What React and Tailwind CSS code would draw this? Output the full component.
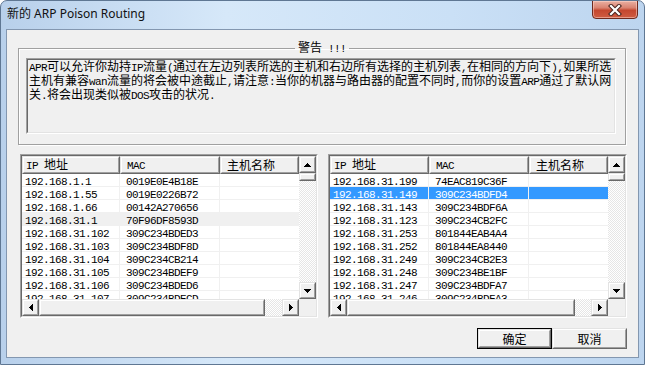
const leftRows = [
  ['192.168.1.1', '0019E0E4B18E'],
  ['192.168.1.55', '0019E0226B72'],
  ['192.168.1.66', '00142A270656'],
  ['192.168.31.1', '70F96DF8593D'],
  ['192.168.31.102', '309C234BDED3'],
  ['192.168.31.103', '309C234BDF8D'],
  ['192.168.31.104', '309C234CB214'],
  ['192.168.31.105', '309C234BDEF9'],
  ['192.168.31.106', '309C234BDED6'],
  ['192.168.31.107', '309C234BDECD'],
];

const rightRows = [
  ['192.168.31.199', '74EAC819C36F'],
  ['192.168.31.149', '309C234BDFD4'],
  ['192.168.31.143', '309C234BDF6A'],
  ['192.168.31.123', '309C234CB2FC'],
  ['192.168.31.253', '801844EAB4A4'],
  ['192.168.31.252', '801844EA8440'],
  ['192.168.31.249', '309C234CB2E3'],
  ['192.168.31.248', '309C234BE1BF'],
  ['192.168.31.247', '309C234BDFA7'],
  ['192.168.31.246', '309C234BDFA3'],
];

// halfwidth runs get a 6px-wide mono face, like the bitmap font in the shot
function T({ s }) {
  return s.split(/([\x20-\x7e]+)/).map((p, i) => {
    if (!p) return null;
    if (/^[\x20-\x7e]+$/.test(p))
      return (
        <span key={i} className="font-['Liberation_Mono'] text-[11px] tracking-[-0.6px] whitespace-pre">
          {p}
        </span>
      );
    return <span key={i}>{p}</span>;
  });
}

function Raised({ className = '', inner = 'justify-center', children }) {
  return (
    <div className={`border border-t-[#e3e3e3] border-l-[#e3e3e3] border-r-[#696969] border-b-[#696969] bg-[#f0f0f0] ${className}`}>
      <div className={`w-full h-full border border-t-white border-l-white border-r-[#a0a0a0] border-b-[#a0a0a0] flex items-center ${inner}`}>
        {children}
      </div>
    </div>
  );
}

const Tri = ({ d, w, h }) => (
  <svg width={w} height={h} viewBox={`0 0 ${w} ${h}`} shapeRendering="crispEdges">
    <path d={d} fill="#000" />
  </svg>
);
const Up = () => <Tri w={7} h={4} d="M3 0h1v1h1v1h1v1h1v1H0V3h1V2h1V1h1z" />;
const Down = () => <Tri w={7} h={4} d="M0 0h7v1H6v1H5v1H4v1H3V3H2V2H1V1H0z" />;
const Left = () => <Tri w={4} h={7} d="M3 0h1v7H3V6H2V5H1V4H0V3h1V2h1V1h1z" />;
const Right = () => <Tri w={4} h={7} d="M0 0h1v1h1v1h1v1h1v1H3v1H2v1H1v1H0z" />;

const dither =
  "bg-[repeating-conic-gradient(#e6e6e6_0_25%,#ffffff_0_50%)] bg-[length:2px_2px]";

function ListView({ rows, cols, sel, selClass, thumb, track }) {
  return (
    <div className="h-[164px] border border-t-[#a0a0a0] border-l-[#a0a0a0] border-r-white border-b-white">
      <div className="h-full flex bg-white border border-t-[#696969] border-l-[#696969] border-r-[#e3e3e3] border-b-[#e3e3e3]">
        <div className="flex-1 min-w-0 flex flex-col">
          <div className="flex h-[18px] shrink-0">
            {['IP 地址', 'MAC', '主机名称'].map((h, i) => (
              <Raised key={h} className={`h-[18px] ${cols[i]}`} inner={`justify-start ${i === 0 ? 'pl-[2px]' : 'pl-[5px]'}`}>
                <span className="text-[12px] leading-[12px] whitespace-nowrap">
                  <T s={h} />
                </span>
              </Raised>
            ))}
          </div>
          <div className="flex-1 overflow-hidden">
            {rows.map((r, ri) => (
              <div
                key={r[0]}
                className={`flex h-[13px] text-[12px] leading-[12px] whitespace-nowrap ${ri === sel ? selClass : ''}`}
              >
                <div className={`${cols[0]} pl-[3px] border-r border-b border-[#f0f0f0]`}>
                  <T s={r[0]} />
                </div>
                <div className={`${cols[1]} pl-[6px] border-r border-b border-[#f0f0f0]`}>
                  <T s={r[1]} />
                </div>
                <div className={`${cols[2]} border-b border-[#f0f0f0]`} />
              </div>
            ))}
          </div>
          <div className="h-[17px] shrink-0 flex">
            <Raised className="w-[17px] h-[17px]">
              <Left />
            </Raised>
            <Raised className={`${thumb} h-[17px]`} />
            <div className={`${track} h-[17px] ${dither}`} />
            <Raised className="w-[17px] h-[17px]">
              <Right />
            </Raised>
          </div>
        </div>
        <div className="w-[17px] shrink-0 flex flex-col">
          <Raised className="w-[17px] h-[17px] shrink-0">
            <Up />
          </Raised>
          <Raised className="w-[17px] h-[8px] shrink-0" />
          <div className={`flex-1 ${dither}`} />
          <Raised className="w-[17px] h-[17px] shrink-0">
            <Down />
          </Raised>
          <div className="h-[17px] shrink-0 bg-[#f0f0f0]" />
        </div>
      </div>
    </div>
  );
}

export default function App() {
  return (
    <div className="w-[645px] h-[365px] overflow-hidden rounded-t-[7px] border border-[#5f7793] bg-[linear-gradient(90deg,#b8d0eb,#d6e8f9_35%,#cae0f6_70%,#bdd5ef)] flex flex-col text-black">
      {/* title bar */}
      <div className="h-[28px] shrink-0 flex items-start justify-between pl-[6px] pr-[6px]">
        <span className="mt-[5px] text-[12px] leading-[16px] font-['Noto_Sans','Noto_Sans_CJK_SC',sans-serif] text-[#111]">
          新的 ARP Poison Routing
        </span>
        <div className="-mt-px w-[46px] h-[19px] rounded-b-[4px] border border-[#6e2a1f] bg-[linear-gradient(#eab0a2,#d98371_40%,#c4472f_55%,#cf5c42)] flex items-center justify-center shadow-[inset_0_0_0_1px_rgba(255,220,210,0.5)]">
          <svg width="14" height="12" viewBox="0 0 14 12">
            <path d="M3 2L11 10M11 2L3 10" stroke="#4a2520" strokeWidth="4.2" strokeLinecap="square" />
            <path d="M3 2L11 10M11 2L3 10" stroke="#fff" strokeWidth="2.2" strokeLinecap="square" />
          </svg>
        </div>
      </div>

      {/* client area */}
      <div className="mx-[5px] h-[329px] shrink-0 border border-[#8397b0] bg-[#f0f0f0] flex flex-col font-['Noto_Sans_CJK_SC',sans-serif] text-[12px]">
        <fieldset className="ml-[11px] mt-[11px] w-[608px] border border-[#a0a0a0] shadow-[inset_1px_1px_0_#fff,1px_1px_0_#fff] px-[7px] pt-[3px] pb-[10px]">
          <legend className="mx-auto px-[3px] text-[12px] leading-[12px]">
            <T s="警告 !!!" />
          </legend>
          <div className="w-[590px] h-[76px] border border-t-[#a0a0a0] border-l-[#a0a0a0] border-r-white border-b-white">
            <div className="h-full border border-t-[#696969] border-l-[#696969] border-r-[#e3e3e3] border-b-[#e3e3e3] px-px text-[12px] leading-[12px] whitespace-nowrap">
              <div>
                <T s="APR可以允许你劫持IP流量(通过在左边列表所选的主机和右边所有选择的主机列表,在相同的方向下),如果所选" />
              </div>
              <div>
                <T s="主机有兼容wan流量的将会被中途截止,请注意:当你的机器与路由器的配置不同时,而你的设置ARP通过了默认网" />
              </div>
              <div>
                <T s="关.将会出现类似被DOS攻击的状况." />
              </div>
            </div>
          </div>
        </fieldset>

        <div className="mt-[9px] ml-[13px] flex gap-[10px]">
          <div className="w-[298px]">
            <ListView
              rows={leftRows}
              cols={['w-[98px]', 'w-[100px]', 'w-[79px]']}
              sel={3}
              selClass="bg-[#f0f0f0]"
              thumb="w-[226px]"
              track="w-[17px]"
            />
          </div>
          <div className="w-[299px]">
            <ListView
              rows={rightRows}
              cols={['w-[99px]', 'w-[100px]', 'w-[79px]']}
              sel={1}
              selClass="bg-[#3399ff] text-white"
              thumb="w-[228px]"
              track="w-[16px]"
            />
          </div>
        </div>

        <div className="mt-[10px] pr-[11px] flex justify-end">
          <div className="w-[75px] h-[21px] border border-black">
            <Raised className="w-full h-full">
              <span className="leading-[12px]">确定</span>
            </Raised>
          </div>
          <Raised className="w-[75px] h-[21px]">
            <span className="leading-[12px]">取消</span>
          </Raised>
        </div>
      </div>
    </div>
  );
}
